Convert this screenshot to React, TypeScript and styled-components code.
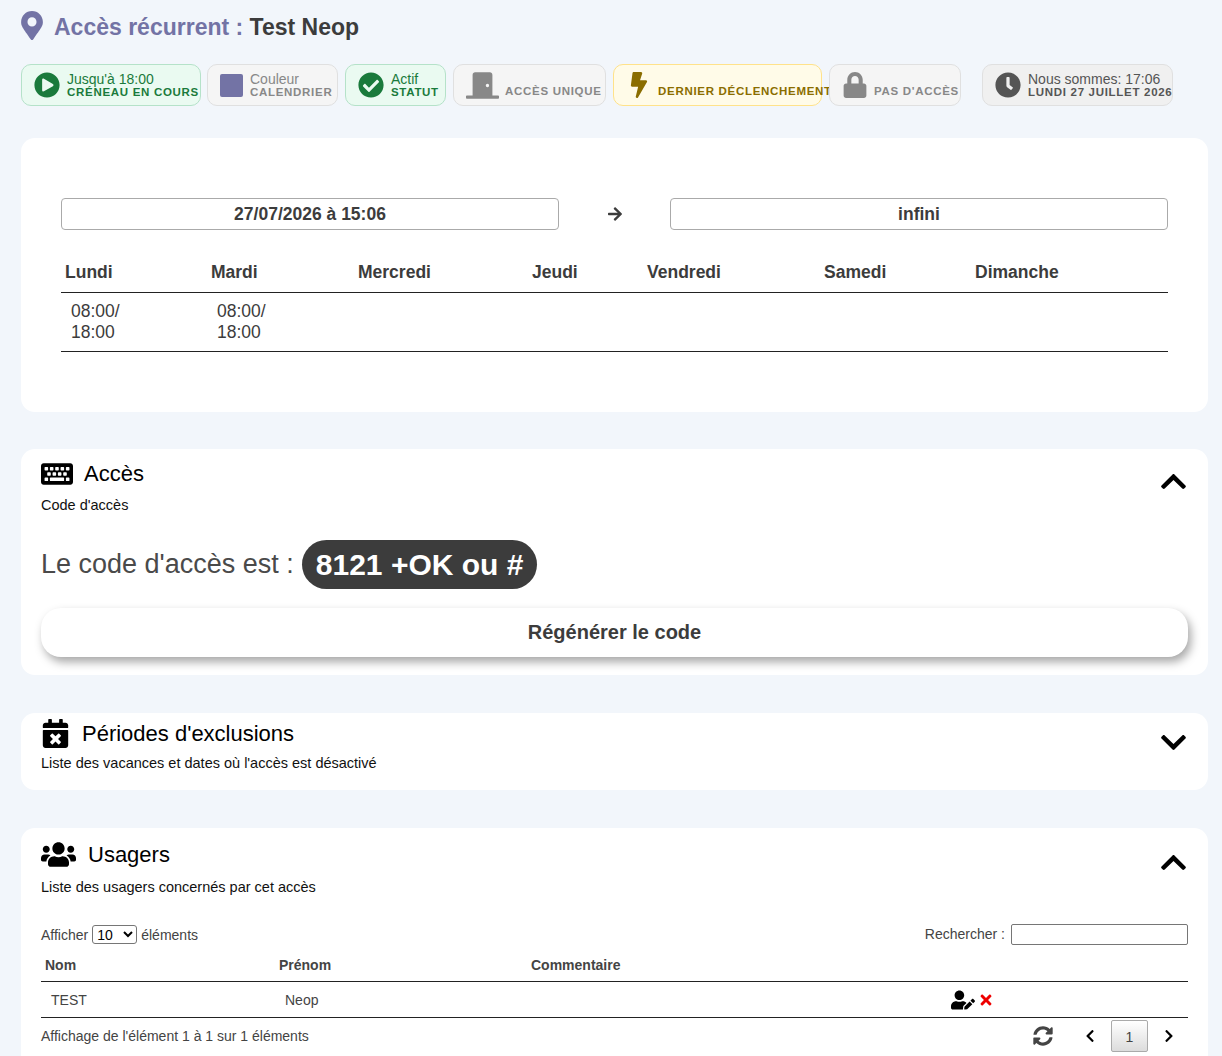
import React from "react";
import styled, { createGlobalStyle } from "styled-components";
import {
  FaArrowRight,
  FaBolt,
  FaCalendarTimes,
  FaCheckCircle,
  FaChevronDown,
  FaChevronLeft,
  FaChevronRight,
  FaChevronUp,
  FaClock,
  FaDoorClosed,
  FaKeyboard,
  FaLock,
  FaMapMarkerAlt,
  FaPlayCircle,
  FaSyncAlt,
  FaTimes,
  FaUserEdit,
  FaUsers,
} from "react-icons/fa";

type Tone = "green" | "gray" | "yellow" | "dark";

const tones = {
  green: { bg: "#eafaf1", border: "#b5e2c9", main: "#1a7a3c", sub: "#1a7a3c" },
  gray: { bg: "#f5f5f5", border: "#e0e0e0", main: "#888888", sub: "#888888" },
  yellow: { bg: "#fffbe8", border: "#ffe28a", main: "#8a6d00", sub: "#8a6d00" },
  dark: { bg: "#f0f0f0", border: "#e0e0e0", main: "#555555", sub: "#555555" },
};

const GlobalStyle = createGlobalStyle`
  html, body {
    margin: 0;
    padding: 0;
    height: 1056px;
    overflow: hidden;
    background: #f2f6fb;
    font-family: "Liberation Sans", Arial, sans-serif;
    color: #3c3c3c;
  }
`;

const Page = styled.div`
  padding: 11px 14px 0 21px;
`;

const TitleRow = styled.div`
  display: flex;
  align-items: center;
  height: 29px;
  color: #7373a5;
  svg {
    width: 22px;
    height: 29px;
    flex: none;
  }
`;

const Title = styled.h1`
  margin: 4px 0 0 11px;
  font-size: 23px;
  font-weight: 700;
  line-height: 29px;
  color: #7373a5;
  span {
    color: #3c3c3c;
  }
`;

const BadgeRow = styled.div`
  display: flex;
  margin-top: 24px;
`;

const Badge = styled.div<{ $tone: Tone; $width: number; $gap: number }>`
  box-sizing: border-box;
  display: flex;
  align-items: center;
  flex: none;
  width: ${(p) => p.$width}px;
  height: 42px;
  margin-right: ${(p) => p.$gap}px;
  padding-left: 12px;
  border: 1px solid ${(p) => tones[p.$tone].border};
  border-radius: 10px;
  background: ${(p) => tones[p.$tone].bg};
  color: ${(p) => tones[p.$tone].main};
  svg {
    flex: none;
  }
`;

const BadgeText = styled.div`
  margin-left: 7px;
  display: flex;
  flex-direction: column;
`;

const BadgeMain = styled.span`
  font-size: 14px;
  font-weight: 500;
  line-height: 14px;
`;

const BadgeSub = styled.span<{ $bold?: boolean }>`
  font-size: 11.5px;
  font-weight: ${(p) => (p.$bold ? 700 : 700)};
  letter-spacing: 0.7px;
  line-height: 13px;
  white-space: nowrap;
`;

const ColorSwatch = styled.div`
  width: 23px;
  height: 23px;
  flex: none;
  border-radius: 2px;
  background: #7373a5;
`;

const IconBadgeLabel = styled(BadgeSub)`
  align-self: flex-end;
  margin: 0 0 7px 6px;
`;

const Card = styled.section<{ $mt: number }>`
  margin-top: ${(p) => p.$mt}px;
  border-radius: 14px;
  background: #ffffff;
  padding: 0 20px;
`;

const ScheduleCard = styled(Card)`
  height: 274px;
  box-sizing: border-box;
  padding: 60px 40px 0;
`;

const DateRow = styled.div`
  display: flex;
  align-items: center;
  justify-content: space-between;
`;

const DateBox = styled.div`
  box-sizing: border-box;
  width: 498px;
  height: 32px;
  border: 1px solid #aaaaaa;
  border-radius: 4px;
  text-align: center;
  font-size: 17.5px;
  font-weight: 700;
  line-height: 30px;
  color: #3c3c3c;
`;

const DateArrow = styled(FaArrowRight)`
  width: 16px;
  height: 16px;
  color: #3c3c3c;
`;

const WeekTable = styled.table`
  width: 100%;
  margin-top: 22px;
  border-collapse: collapse;
  table-layout: fixed;
  font-size: 17.5px;
  th {
    height: 40px;
    padding: 0 0 0 4px;
    text-align: left;
    font-weight: 700;
    vertical-align: middle;
    border-bottom: 1px solid #222222;
  }
  td {
    height: 58px;
    padding: 0 0 0 10px;
    line-height: 21px;
    vertical-align: middle;
    border-bottom: 1px solid #222222;
  }
`;

const CardHead = styled.div`
  display: flex;
  justify-content: space-between;
`;

const HeadTitle = styled.div`
  display: flex;
  align-items: center;
  color: #000000;
  font-size: 22px;
  line-height: 26px;
`;

const HeadSub = styled.div`
  font-size: 14.5px;
  line-height: 18px;
  color: #111111;
`;

const Chevron = styled.div`
  display: flex;
  align-items: center;
  color: #000000;
  svg {
    width: 29px;
    height: 29px;
  }
`;

const CodeRow = styled.div`
  display: flex;
  align-items: center;
  margin-top: 26px;
  font-size: 27px;
  color: #4a4a4a;
`;

const CodePill = styled.span`
  margin-left: 8px;
  padding: 0 14px;
  height: 49px;
  line-height: 49px;
  border-radius: 25px;
  background: #3c3c3c;
  color: #ffffff;
  font-size: 30px;
  font-weight: 700;
`;

const RegenButton = styled.button`
  display: block;
  width: 1147px;
  height: 49px;
  margin-top: 19px;
  border: none;
  border-radius: 20px;
  background: #ffffff;
  box-shadow: 3px 5px 10px rgba(0, 0, 0, 0.35);
  font-family: inherit;
  font-size: 20px;
  font-weight: 700;
  color: #3c3c3c;
`;

const ToolBar = styled.div`
  display: flex;
  justify-content: space-between;
  align-items: center;
  margin-top: 28px;
  height: 20px;
  font-size: 14px;
  color: #444444;
`;

const SmallSelect = styled.select`
  width: 45px;
  height: 19px;
  margin: 0 4px;
  padding: 0;
  font-family: inherit;
  font-size: 14px;
  background: #ffffff;
  border: 1px solid #767676;
  border-radius: 3px;
`;

const SearchInput = styled.input`
  box-sizing: border-box;
  width: 177px;
  height: 21px;
  margin-left: 6px;
  border: 1px solid #767676;
  border-radius: 2px;
`;

const UsersTable = styled.table`
  width: 100%;
  margin-top: 5px;
  border-collapse: collapse;
  table-layout: fixed;
  font-size: 14px;
  color: #444444;
  th {
    height: 32px;
    padding: 0 0 0 4px;
    text-align: left;
    font-weight: 700;
    border-bottom: 1px solid #222222;
  }
  td {
    height: 35px;
    padding: 0 0 0 10px;
    border-bottom: 1px solid #222222;
  }
`;

const RowActions = styled.div`
  display: flex;
  align-items: center;
  svg + svg {
    margin-left: 3px;
  }
`;

const TableFooter = styled.div`
  display: flex;
  justify-content: space-between;
  align-items: center;
  height: 36px;
  font-size: 14px;
  color: #444444;
`;

const Pager = styled.div`
  display: flex;
  align-items: center;
  margin-right: 12px;
`;

const PageNumber = styled.div`
  box-sizing: border-box;
  width: 37px;
  height: 32px;
  margin: 0 14px;
  border: 1px solid #aaaaaa;
  border-radius: 2px;
  background: linear-gradient(#ffffff, #dcdcdc);
  text-align: center;
  line-height: 32px;
  font-size: 14px;
`;

const days = ["Lundi", "Mardi", "Mercredi", "Jeudi", "Vendredi", "Samedi", "Dimanche"];
const dayWidths = [146, 147, 174, 115, 177, 151, 197];

export default function App() {
  return (
    <Page>
      <GlobalStyle />
      <TitleRow>
        <FaMapMarkerAlt />
        <Title>
          Accès récurrent : <span>Test Neop</span>
        </Title>
      </TitleRow>

      <BadgeRow>
        <Badge $tone="green" $width={180} $gap={6}>
          <FaPlayCircle size={26} />
          <BadgeText>
            <BadgeMain>Jusqu'à 18:00</BadgeMain>
            <BadgeSub>CRÉNEAU EN COURS</BadgeSub>
          </BadgeText>
        </Badge>
        <Badge $tone="gray" $width={131} $gap={7}>
          <ColorSwatch />
          <BadgeText>
            <BadgeMain>Couleur</BadgeMain>
            <BadgeSub>CALENDRIER</BadgeSub>
          </BadgeText>
        </Badge>
        <Badge $tone="green" $width={101} $gap={7}>
          <FaCheckCircle size={26} />
          <BadgeText>
            <BadgeMain>Actif</BadgeMain>
            <BadgeSub>STATUT</BadgeSub>
          </BadgeText>
        </Badge>
        <Badge $tone="gray" $width={153} $gap={7}>
          <FaDoorClosed size={33} />
          <IconBadgeLabel>ACCÈS UNIQUE</IconBadgeLabel>
        </Badge>
        <Badge $tone="yellow" $width={209} $gap={7}>
          <FaBolt size={26} />
          <IconBadgeLabel>DERNIER DÉCLENCHEMENT</IconBadgeLabel>
        </Badge>
        <Badge $tone="gray" $width={132} $gap={21}>
          <FaLock size={26} />
          <IconBadgeLabel>PAS D'ACCÈS</IconBadgeLabel>
        </Badge>
        <Badge $tone="dark" $width={191} $gap={0}>
          <FaClock size={26} />
          <BadgeText>
            <BadgeMain>Nous sommes: 17:06</BadgeMain>
            <BadgeSub>LUNDI 27 JUILLET 2026</BadgeSub>
          </BadgeText>
        </Badge>
      </BadgeRow>

      <ScheduleCard $mt={32}>
        <DateRow>
          <DateBox>27/07/2026 à 15:06</DateBox>
          <DateArrow />
          <DateBox>infini</DateBox>
        </DateRow>
        <WeekTable>
          <colgroup>
            {dayWidths.map((w, i) => (
              <col key={i} width={w} />
            ))}
          </colgroup>
          <thead>
            <tr>
              {days.map((d) => (
                <th key={d}>{d}</th>
              ))}
            </tr>
          </thead>
          <tbody>
            <tr>
              <td>
                08:00/
                <br />
                18:00
              </td>
              <td>
                08:00/
                <br />
                18:00
              </td>
              <td />
              <td />
              <td />
              <td />
              <td />
            </tr>
          </tbody>
        </WeekTable>
      </ScheduleCard>

      <Card $mt={37} style={{ height: 226 }}>
        <CardHead>
          <div>
            <HeadTitle style={{ paddingTop: 9 }}>
              <FaKeyboard size={32} style={{ marginRight: 11 }} />
              Accès
            </HeadTitle>
            <HeadSub style={{ marginTop: 6 }}>Code d'accès</HeadSub>
          </div>
          <Chevron>
            <FaChevronUp />
          </Chevron>
        </CardHead>
        <CodeRow>
          Le code d'accès est : <CodePill>8121 +OK ou #</CodePill>
        </CodeRow>
        <RegenButton>Régénérer le code</RegenButton>
      </Card>

      <Card $mt={38} style={{ height: 77 }}>
        <CardHead>
          <div>
            <HeadTitle style={{ paddingTop: 6 }}>
              <FaCalendarTimes size={29} style={{ marginRight: 12 }} />
              Périodes d'exclusions
            </HeadTitle>
            <HeadSub style={{ marginTop: 6 }}>
              Liste des vacances et dates où l'accès est désactivé
            </HeadSub>
          </div>
          <Chevron>
            <FaChevronDown />
          </Chevron>
        </CardHead>
      </Card>

      <Card $mt={38} style={{ height: 240 }}>
        <CardHead>
          <div>
            <HeadTitle style={{ paddingTop: 9 }}>
              <FaUsers size={35} style={{ marginRight: 12 }} />
              Usagers
            </HeadTitle>
            <HeadSub style={{ marginTop: 6 }}>
              Liste des usagers concernés par cet accès
            </HeadSub>
          </div>
          <Chevron>
            <FaChevronUp />
          </Chevron>
        </CardHead>
        <ToolBar>
          <div>
            Afficher
            <SmallSelect defaultValue="10">
              <option>10</option>
            </SmallSelect>
            éléments
          </div>
          <div>
            Rechercher :
            <SearchInput />
          </div>
        </ToolBar>
        <UsersTable>
          <colgroup>
            <col width={234} />
            <col width={252} />
            <col width={414} />
            <col />
          </colgroup>
          <thead>
            <tr>
              <th>Nom</th>
              <th>Prénom</th>
              <th>Commentaire</th>
              <th />
            </tr>
          </thead>
          <tbody>
            <tr>
              <td>TEST</td>
              <td>Neop</td>
              <td />
              <td>
                <RowActions>
                  <FaUserEdit size={24} color="#000000" />
                  <FaTimes size={16} color="#ee0000" />
                </RowActions>
              </td>
            </tr>
          </tbody>
        </UsersTable>
        <TableFooter>
          <div>Affichage de l'élément 1 à 1 sur 1 éléments</div>
          <Pager>
            <FaSyncAlt size={20} style={{ marginRight: 30 }} />
            <FaChevronLeft size={14} color="#000000" />
            <PageNumber>1</PageNumber>
            <FaChevronRight size={14} color="#000000" />
          </Pager>
        </TableFooter>
      </Card>
    </Page>
  );
}
